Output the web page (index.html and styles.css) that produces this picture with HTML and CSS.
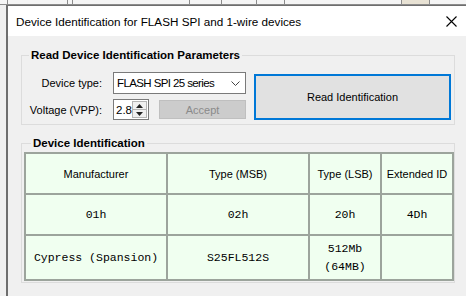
FILE: index.html
```html
<!DOCTYPE html>
<html lang="en">
<head>
    <meta charset="UTF-8">
    <meta name="viewport" content="width=device-width, initial-scale=1.0">
    <title>Device Identification</title>
    <link rel="stylesheet" href="styles.css">
</head>
<body>
    <div class="taskbar">
        <div class="tab tab-1"></div>
        <div class="tab tab-2"></div>
        <div class="tab tab-3"></div>
        <div class="tab tab-4"></div>
        <div class="tab tab-5"></div>
        <div class="tab tab-6"></div>
        <div class="tab tab-7"></div>
        <div class="tab tab-8"></div>
        <div class="tab tab-9"></div>
        <div class="tab tab-10"></div>
    </div>

    <div class="dialog">
        <div class="titlebar">
            <span class="title">Device Identification for FLASH SPI and 1-wire devices</span>
            <svg class="close" width="11" height="11" viewBox="0 0 11 11">
                <path d="M0.5 0.5 L10.5 10.5 M10.5 0.5 L0.5 10.5" stroke="#000" stroke-width="1.1" fill="none"/>
            </svg>
        </div>

        <div class="dialog-body">
            <fieldset class="group group-params">
                <legend>Read Device Identification Parameters</legend>
                <div class="params">
                    <div class="fields">
                        <span class="field-label">Device type:</span>
                        <div class="select">
                            <span class="select-text">FLASH SPI 25 series</span>
                            <svg width="9" height="5" viewBox="0 0 9 5">
                                <path d="M0.5 0.5 L4.5 4.5 L8.5 0.5" stroke="#444" stroke-width="1" fill="none"/>
                            </svg>
                        </div>
                        <span class="field-label">Voltage (VPP):</span>
                        <div class="voltage-row">
                            <div class="spinner">
                                <span class="spin-value">2.8</span>
                                <div class="spin-buttons">
                                    <span class="spin-btn">
                                        <svg width="7" height="4" viewBox="0 0 7 4"><path d="M0 4 L3.5 0 L7 4 Z" fill="#222"/></svg>
                                    </span>
                                    <span class="spin-btn">
                                        <svg width="7" height="4" viewBox="0 0 7 4"><path d="M0 0 L3.5 4 L7 0 Z" fill="#222"/></svg>
                                    </span>
                                </div>
                            </div>
                            <button class="accept" disabled>Accept</button>
                        </div>
                    </div>
                    <button class="read-btn">Read Identification</button>
                </div>
            </fieldset>

            <fieldset class="group group-result">
                <legend>Device Identification</legend>
                <table class="id-table">
                    <colgroup>
                        <col class="col-wide">
                        <col class="col-wide">
                        <col class="col-narrow">
                        <col class="col-narrow">
                    </colgroup>
                    <tr class="row-head">
                        <th>Manufacturer</th>
                        <th>Type (MSB)</th>
                        <th>Type (LSB)</th>
                        <th>Extended ID</th>
                    </tr>
                    <tr class="row-hex">
                        <td>01h</td>
                        <td>02h</td>
                        <td>20h</td>
                        <td>4Dh</td>
                    </tr>
                    <tr class="row-name">
                        <td>Cypress (Spansion)</td>
                        <td>S25FL512S</td>
                        <td>512Mb<br>(64MB)</td>
                        <td></td>
                    </tr>
                </table>
            </fieldset>
        </div>
    </div>
</body>
</html>
```

FILE: styles.css
```css
body {
    margin: 0;
    height: 296px;
    overflow: hidden;
    display: flex;
    flex-direction: column;
    background: #f0f0f0;
    font-family: "Liberation Sans", Arial, sans-serif;
    font-size: 11px;
    color: #000;
}

/* strip of the main window behind the dialog */
.taskbar {
    height: 5px;
    display: flex;
    flex-shrink: 0;
}

.tab {
    box-sizing: border-box;
    background: #f5f5f5;
    border-right: 1px solid #8c8c8c;
    border-bottom: 1px solid #8c8c8c;
}

.tab-1 { width: 8px; }
.tab-2 { width: 60px; }
.tab-3 { width: 5px; }
.tab-4 { width: 117px; }
.tab-5 { width: 32px; }
.tab-6 { width: 35px; }
.tab-7 { width: 28px; }
.tab-8 { width: 117px; }
.tab-9 { width: 28px; background: #e8e2d4; }
.tab-10 { flex: 1; border-right: none; }

.dialog {
    flex: 1;
    margin-left: 6px;
    border-left: 2px solid #6e6e6e;
    border-top: 1px solid #6e6e6e;
    display: flex;
    flex-direction: column;
}

.titlebar {
    height: 30px;
    flex-shrink: 0;
    background: #fff;
    display: flex;
    align-items: center;
    justify-content: space-between;
    padding: 0 9px 0 8px;
}

.title {
    font-size: 11.7px;
}

.close {
    display: block;
}

.dialog-body {
    flex: 1;
    background: #f0f0f0;
    padding: 11px 11px 0 13px;
}

.group {
    margin: 0;
    min-width: 0;
    border: 1px solid #dcdcdc;
}

.group legend {
    font-weight: bold;
    font-size: 11.5px;
    line-height: 16px;
    padding: 0 2px;
    margin-left: 7px;
}

.group-params {
    padding: 9px 3px 4px 0;
}

.group-result {
    margin-top: 10px;
    padding: 1px 2px 1px 2px;
}

.params {
    display: flex;
    align-items: flex-start;
}

.fields {
    display: grid;
    grid-template-columns: 81px 133px;
    column-gap: 10px;
    row-gap: 5px;
    align-items: center;
}

.field-label {
    text-align: right;
    padding-right: 1px;
}

.select {
    height: 22px;
    box-sizing: border-box;
    border: 1px solid #7a7a7a;
    background: #fff;
    display: flex;
    align-items: center;
    justify-content: space-between;
    padding: 0 5px 0 3px;
}

.select-text {
    font-size: 11.5px;
    letter-spacing: -0.6px;
}

.voltage-row {
    display: flex;
    align-items: center;
    gap: 10px;
    height: 21px;
}

.spinner {
    width: 36px;
    height: 21px;
    box-sizing: border-box;
    border: 1px solid #7a7a7a;
    background: #fff;
    display: flex;
    align-items: center;
    justify-content: space-between;
}

.spin-value {
    padding-left: 2px;
    font-size: 11.5px;
}

.spin-buttons {
    width: 15px;
    height: 17px;
    margin-right: 1px;
    display: flex;
    flex-direction: column;
    border: 1px solid #b4b4b4;
    box-sizing: border-box;
    background: #f0f0f0;
}

.spin-btn {
    flex: 1;
    display: flex;
    align-items: center;
    justify-content: center;
}

.spin-btn + .spin-btn {
    border-top: 1px solid #b4b4b4;
}

.accept {
    width: 87px;
    height: 19px;
    background: #cccccc;
    border: 1px solid #bfbfbf;
    color: #8a8a8a;
    font-family: inherit;
    font-size: 11px;
    padding: 0;
}

.read-btn {
    margin-left: 8px;
    margin-top: 2px;
    width: 197px;
    height: 46px;
    background: #e1e1e1;
    border: 2px solid #0078d7;
    font-family: inherit;
    font-size: 11px;
    color: #000;
    padding: 0;
}

.id-table {
    width: 428px;
    border-collapse: collapse;
    table-layout: fixed;
    background: #f0fff0;
}

.col-wide { width: 142px; }
.col-narrow { width: 72px; }

.id-table th,
.id-table td {
    border: 2px solid #9ca49c;
    text-align: center;
    padding: 0;
}

.id-table th {
    font-weight: normal;
    font-size: 11px;
}

.id-table td {
    font-family: "Liberation Mono", "Courier New", monospace;
    font-size: 11.5px;
    line-height: 18px;
}

.row-head { height: 41px; }
.row-hex { height: 41px; }
.row-name { height: 45px; }
```
